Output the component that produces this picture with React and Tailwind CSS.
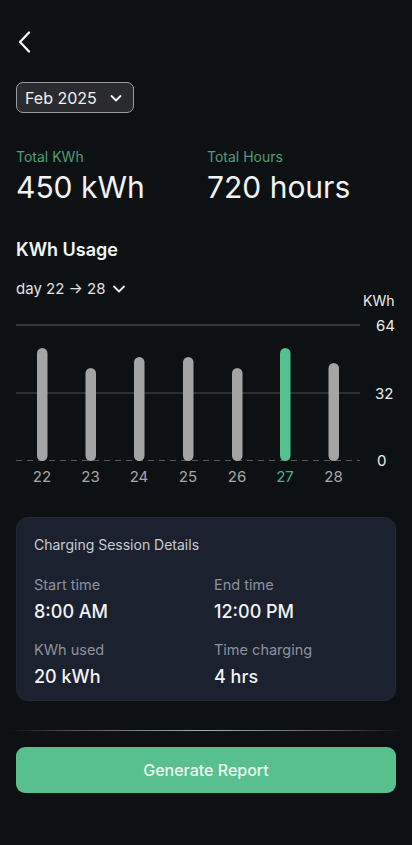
import React from "react";

const bars = [
  { d: "22", x: 26, top: 51 },
  { d: "23", x: 74.5, top: 71 },
  { d: "24", x: 123, top: 60 },
  { d: "25", x: 172, top: 60 },
  { d: "26", x: 221, top: 71 },
  { d: "27", x: 269, top: 51, active: true },
  { d: "28", x: 317.5, top: 66 },
];

export default function App() {
  return (
    <div
      className="min-h-[845px] w-[412px] bg-[#0e1114] text-white"
      style={{ fontFamily: "Inter, 'Noto Sans', sans-serif" }}
    >
      <div className="flex flex-col px-4">
        <button className="mt-[32px] flex h-[20px] w-[20px] items-center">
          <svg width="14" height="22" viewBox="0 0 14 22" className="ml-[1px]">
            <path d="M12 1.5 L3 11 L12 20.5" fill="none" stroke="#ffffff" strokeWidth="2.2" strokeLinecap="round" strokeLinejoin="round" />
          </svg>
        </button>

        <div className="mt-[30px] flex">
          <div className="flex h-[31px] items-center gap-[12px] rounded-[7px] border-[1.5px] border-[#9a9b9d] bg-[#2a2b2e] pl-[8px] pr-[10px]">
            <span className="text-[16px] leading-none text-[#f1f1f1]">Feb 2025</span>
            <svg width="14" height="14" viewBox="0 0 14 14">
              <path d="M2.5 5 L7 9.5 L11.5 5" fill="none" stroke="#f1f1f1" strokeWidth="1.8" strokeLinecap="round" strokeLinejoin="round" />
            </svg>
          </div>
        </div>

        <div className="mt-[34px] grid grid-cols-2">
          <div className="flex flex-col gap-[2px]">
            <span className="text-[14px] leading-[20px] text-[#4f9e75]">Total KWh</span>
            <span className="text-[30px] leading-[36px] font-normal text-[#f3f3f3]">450 kWh</span>
          </div>
          <div className="flex flex-col gap-[2px] pl-[1px]">
            <span className="text-[14px] leading-[20px] text-[#4f9e75]">Total Hours</span>
            <span className="text-[30px] leading-[36px] font-normal text-[#f3f3f3]">720 hours</span>
          </div>
        </div>

        <h2 className="mt-[31px] text-[18px] leading-[28px] font-semibold text-[#f5f5f5]">KWh Usage</h2>

        <div className="mt-[16px] flex items-center gap-[6px] text-[15px] leading-[18px] text-[#e2e2e2]">
          <span>day 22 → 28</span>
          <svg width="14" height="14" viewBox="0 0 14 14">
            <path d="M2 4.5 L7 9.5 L12 4.5" fill="none" stroke="#e8e8e8" strokeWidth="1.8" strokeLinecap="round" strokeLinejoin="round" />
          </svg>
        </div>

        <svg width="380" height="192" viewBox="0 0 380 192" className="-mt-px overflow-visible" style={{ fontFamily: "Inter, sans-serif" }}>
          <text x="347" y="9" fill="#ececec" fontSize="14">KWh</text>
          <line x1="0" y1="28" x2="344" y2="28" stroke="#5f6164" strokeWidth="1.2" />
          <line x1="0" y1="96" x2="344" y2="96" stroke="#4a4c4f" strokeWidth="1.2" />
          <line x1="0" y1="163.5" x2="344" y2="163.5" stroke="#55585b" strokeWidth="1" strokeDasharray="6 5" />
          <text x="360" y="34" fill="#ececec" fontSize="15">64</text>
          <text x="359" y="102" fill="#ececec" fontSize="15">32</text>
          <text x="361" y="169" fill="#ececec" fontSize="15">0</text>
          {bars.map((b) => (
            <g key={b.d}>
              <rect x={b.x - 5} y={b.top} width="10.5" height={164 - b.top} rx="5.25" fill={b.active ? "#56c08e" : "#a4a4a4"} />
              <text x={b.x} y="185" textAnchor="middle" fontSize="15" fill={b.active ? "#4fae7f" : "#a7a7a7"}>{b.d}</text>
            </g>
          ))}
        </svg>

        <div className="mt-[28px] h-[184px] rounded-[12px] border border-[#232836] bg-[#1c2130] px-[17px] pt-[17px]">
          <div className="text-[14px] leading-[20px] text-[#c9ccd3]">Charging Session Details</div>
          <div className="mt-[20px] grid grid-cols-2 gap-y-[16px]">
            <div className="flex flex-col">
              <span className="text-[14.5px] leading-[20px] text-[#8e929b]">Start time</span>
              <span className="mt-[5px] text-[18px] leading-[24px] font-medium text-[#f3f3f3]">8:00 AM</span>
            </div>
            <div className="flex flex-col pl-[8px]">
              <span className="text-[14.5px] leading-[20px] text-[#8e929b]">End time</span>
              <span className="mt-[5px] text-[18px] leading-[24px] font-medium text-[#f3f3f3]">12:00 PM</span>
            </div>
            <div className="flex flex-col">
              <span className="text-[14.5px] leading-[20px] text-[#8e929b]">KWh used</span>
              <span className="mt-[5px] text-[18px] leading-[24px] font-medium text-[#f3f3f3]">20 kWh</span>
            </div>
            <div className="flex flex-col pl-[8px]">
              <span className="text-[14.5px] leading-[20px] text-[#8e929b]">Time charging</span>
              <span className="mt-[5px] text-[18px] leading-[24px] font-medium text-[#f3f3f3]">4 hrs</span>
            </div>
          </div>
        </div>
      </div>

      <div className="mx-[10px] mt-[29px] h-[1px] bg-[linear-gradient(90deg,rgba(120,130,128,0)_0%,#4a504f_15%,#9fb5ab_50%,#4a504f_85%,rgba(120,130,128,0)_100%)]" />

      <div className="px-4">
        <button className="mt-[16px] flex h-[46px] w-full items-center justify-center rounded-[9px] bg-[#57c08e] text-[16px] font-medium text-[#eafaf1]">
          Generate Report
        </button>
      </div>
    </div>
  );
}
